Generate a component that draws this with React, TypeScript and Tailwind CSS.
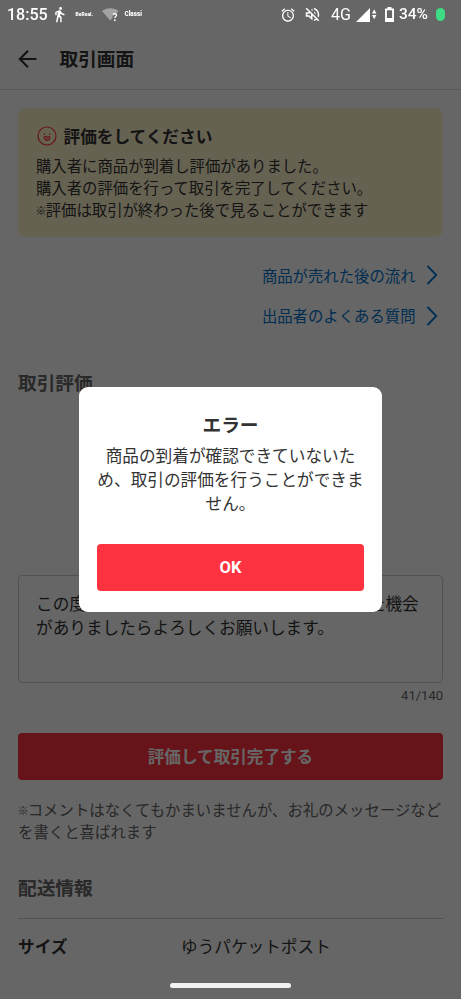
import type { ReactNode } from 'react';
import clsx from 'clsx';

const LINKS = ['商品が売れた後の流れ', '出品者のよくある質問'];

const COMMENT =
  'この度はお取引ありがとうございました。また機会がありましたらよろしくお願いします。';

function WalkIcon() {
  return (
    <svg viewBox="0 0 24 24" className="w-[17px] h-[17px]" fill="currentColor">
      <path d="M13.5 5.5c1.1 0 2-.9 2-2s-.9-2-2-2-2 .9-2 2 .9 2 2 2zM9.800 8.900L7 23h2.100l1.800-8 2.100 2v6h2v-7.500l-2.100-2 .6-3C14.800 12 16.800 13 19 13v-2c-1.900 0-3.500-1-4.300-2.400l-1-1.600c-.4-.6-1-1-1.700-1-.3 0-.5.1-.8.1L6 8.300V13h2V9.600l1.800-.7" />
    </svg>
  );
}

function WifiUnknownIcon() {
  return (
    <svg viewBox="0 0 17 14" className="w-[17px] h-[14px]">
      <path d="M0 3C4.500-.7 12-.7 16.500 3L13.500 6.500H10.500V10L8.200 12.600Z" fill="#a3a3a3" />
      <path
        d="M11.200 7.200c0-2.200 3.300-2.200 3.300-.1 0 1.400-1.700 1.400-1.700 3"
        fill="none"
        stroke="white"
        strokeWidth="1.300"
      />
      <circle cx="12.800" cy="12.200" r="0.9" fill="white" />
    </svg>
  );
}

function AlarmIcon() {
  return (
    <svg viewBox="0 0 24 24" className="w-4 h-4" fill="currentColor">
      <path d="M22 5.720l-4.600-3.860-1.290 1.530 4.600 3.860L22 5.720zM7.880 3.390L6.600 1.860 2 5.710l1.290 1.530 4.590-3.850zM12.500 8H11v6l4.750 2.850.75-1.230-4-2.370V8zM12 4c-4.970 0-9 4.030-9 9s4.020 9 9 9a9 9 0 0 0 0-18zm0 16c-3.870 0-7-3.130-7-7s3.130-7 7-7 7 3.130 7 7-3.130 7-7 7z" />
    </svg>
  );
}

function MutedIcon() {
  return (
    <svg viewBox="2 2 20 20" className="w-[15px] h-[15px]" fill="currentColor">
      <path d="M4.340 2.930L2.930 4.340 7.290 8.700 7 9H3v6h4l5 5v-6.590l4.180 4.180c-.65.49-1.380.88-2.180 1.110v2.060a8.940 8.940 0 0 0 3.610-1.750l2.050 2.050 1.410-1.410L4.340 2.930zM10 15.170L7.830 13H5v-2h2.830l.88-.88L10 11.410v3.760zM19 12c0 .82-.15 1.610-.41 2.340l1.530 1.530c.56-1.170.88-2.480.88-3.870 0-4.280-2.990-7.860-7-8.770v2.060c2.890.86 5 3.540 5 6.710zm-7-8l-1.880 1.880L12 7.760V4zm4.500 8A4.500 4.500 0 0 0 14 7.970v1.790l2.480 2.480c.01-.08.02-.16.02-.24z" />
    </svg>
  );
}

function StatusBar() {
  return (
    <div className="relative z-20 flex h-[29px] items-center text-[16px] font-medium text-white [font-family:Roboto,sans-serif]">
      <span className="ml-[7px] w-[41px]">18:55</span>
      <span className="ml-[3px]">
        <WalkIcon />
      </span>
      <span className="ml-[7.500px] w-[18px] text-[5px] font-black">BeReal.</span>
      <span className="ml-[8px]">
        <WifiUnknownIcon />
      </span>
      <span className="ml-[6px] text-[6.300px] font-black">Classi</span>

      <div className="ml-auto flex items-center">
        <AlarmIcon />
        <span className="ml-[9.500px]">
          <MutedIcon />
        </span>
        <span className="ml-[11px] w-[22px] font-normal">4G</span>
        <svg viewBox="0 0 22 14" className="ml-[3px] w-[22px] h-[14px]" fill="currentColor">
          <path d="M0 14L14 0V14ZM16 5.500L18.200 1.200 20.400 5.500ZM16 7H20.400L18.200 11.300Z" />
        </svg>
        <svg viewBox="0 0 9 15" className="ml-[7px] mb-[1px] w-[9px] h-[15px]">
          <path d="M2.500 0h4v1.500H9V15H0V1.500h2.500z" fill="white" />
          <path d="M1.900 3.300h5.200v7.700H1.900z" fill="#666" />
        </svg>
        <span className="ml-[5px] w-[29px] text-[15.500px]">34%</span>
        <span className="ml-[8px] mr-[16px] mb-[1px] h-[13px] w-[9px] rounded-full bg-[#3ddc84]" />
      </div>
    </div>
  );
}

function SmileIcon() {
  return (
    <svg viewBox="0 0 20 20" className="ml-[1px] w-5 h-5" fill="none" stroke="#ff333f" strokeWidth="1.200">
      <circle cx="10" cy="10" r="9" />
      <path d="M7.300 10.900h5.400c0 4.600-5.400 4.600-5.400 0z" />
      <path d="M8.300 13.200q1.700-.9 3.400 0" strokeWidth="0.900" />
      <circle cx="7.400" cy="8.200" r="0.800" fill="#ff333f" stroke="none" />
      <circle cx="12.600" cy="8.200" r="0.800" fill="#ff333f" stroke="none" />
    </svg>
  );
}

// The reference mark is set narrower than a full-width glyph
function Kome() {
  return (
    <span className="inline-block w-[9.700px] text-[11px] font-bold leading-none align-[1px] -indent-[0.500px]">
      ※
    </span>
  );
}

function RedButton({ children, className }: { children: ReactNode; className?: string }) {
  return (
    <button
      className={clsx(
        'block h-[47px] w-full rounded-[4px] bg-[#ff333f] text-[16.600px] font-bold text-white',
        className
      )}
    >
      {children}
    </button>
  );
}

function ErrorDialog() {
  return (
    <div className="fixed inset-0 z-10 flex items-center justify-center bg-black/60">
      <div
        role="dialog"
        className="h-[225px] w-[303px] rounded-[9px] bg-white px-[18px] pt-[23px] text-center text-[#333]"
      >
        <h2 className="text-[18.700px] font-bold leading-[28px]">エラー</h2>
        <p className="mt-[5px] whitespace-nowrap text-[16.650px] leading-[24px]">
          商品の到着が確認できていないた
          <br />
          め、取引の評価を行うことができま
          <br />
          せん。
        </p>
        <RedButton className="mt-[29px] pt-[2px] [font-family:Roboto,sans-serif]">OK</RedButton>
      </div>
    </div>
  );
}

export default function App() {
  return (
    <div className="h-[999px] overflow-hidden bg-white text-[#333] [font-family:'Noto_Sans_CJK_JP',sans-serif]">
      <StatusBar />

      <header className="flex h-[61px] items-center border-b border-[#ddd] pb-[1px] pl-[18px]">
        <svg
          viewBox="0 0 20 20"
          className="w-5 h-5"
          fill="none"
          stroke="#333"
          strokeWidth="2.100"
        >
          <path d="M18.500 10H2M10 1.800L1.800 10 10 18.200" />
        </svg>
        <h1 className="ml-[21.500px] pb-[1px] text-[18.700px] font-bold leading-none">取引画面</h1>
      </header>

      <main className="px-[18px] pt-[18px]">
        <section className="h-[129px] rounded-[8px] bg-[#fff5cc] px-[18px] pt-[16px]">
          <div className="flex h-[24px] items-center">
            <SmileIcon />
            <h2 className="ml-[6.500px] text-[16.650px] font-bold">評価をしてください</h2>
          </div>
          <p className="mt-[6px] whitespace-nowrap text-[15.370px] leading-[22.200px]">
            購入者に商品が到着し評価がありました。
            <br />
            購入者の評価を行って取引を完了してください。
            <br />
            <Kome />
            評価は取引が終わった後で見ることができます
          </p>
        </section>

        <nav className="mt-[18px]">
          {LINKS.map((label) => (
            <a
              key={label}
              className="flex h-[40.500px] items-center justify-end pr-[5px] text-[15.370px] text-[#0073cc]"
            >
              {label}
              <svg
                viewBox="0 0 12 20"
                className="ml-[10.500px] w-3 h-5"
                fill="none"
                stroke="currentColor"
                strokeWidth="1.800"
              >
                <path d="M1.500 1L10.300 10 1.500 19" />
              </svg>
            </a>
          ))}
        </nav>

        <h2 className="mt-[32px] text-[18.700px] font-bold leading-[28px] text-[#666]">取引評価</h2>

        <div className="mt-[179px] h-[108px] rounded-[4px] border border-[#ccc] px-[17px] pt-[15px] text-[16.650px] leading-[24px]">
          <p className="-mr-2 w-[388px] break-all">{COMMENT}</p>
        </div>
        <p className="mt-[4px] text-right text-[13px] leading-[18px] text-[#666] [font-family:Roboto,sans-serif]">
          41/140
        </p>

        <RedButton className="mt-[28px] pb-[1px]">評価して取引完了する</RedButton>

        <p className="mt-[18px] whitespace-nowrap text-[15.370px] leading-[22.200px] tracking-[0.040px] text-[#666]">
          <Kome />
          コメントはなくてもかまいませんが、お礼のメッセージなど
          <br />
          を書くと喜ばれます
        </p>

        <h2 className="mt-[31px] text-[18.700px] font-bold leading-[28px] text-[#666]">配送情報</h2>
        <dl className="mt-[17px] flex border-t border-[#ccc] pt-[15px] text-[16.650px] leading-[24px]">
          <dt className="w-[163px] font-bold">サイズ</dt>
          <dd>ゆうパケットポスト</dd>
        </dl>
      </main>

      <ErrorDialog />

      {/* System gesture bar */}
      <div className="fixed inset-x-0 bottom-[11px] z-20 flex justify-center">
        <div className="h-[5px] w-[121px] rounded-full bg-[#f2f2f2]" />
      </div>
    </div>
  );
}
